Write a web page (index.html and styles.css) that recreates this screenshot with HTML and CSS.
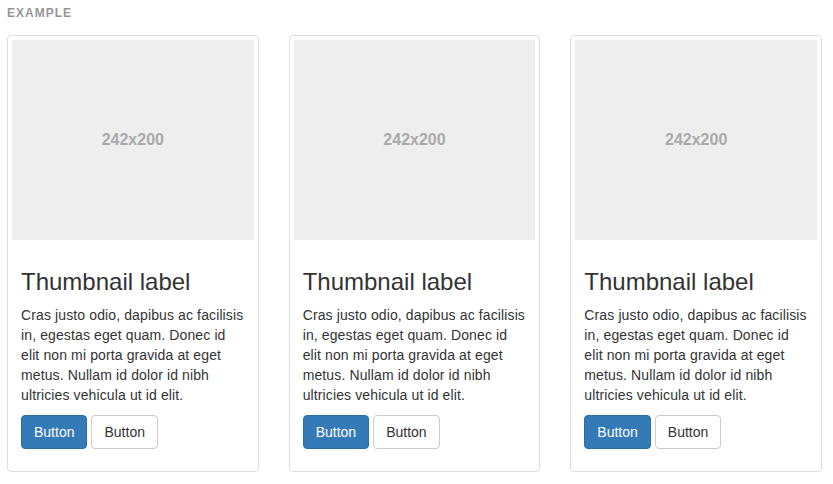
FILE: index.html
```html
<!DOCTYPE html>
<html lang="en">
<head>
    <meta charset="UTF-8">
    <meta name="viewport" content="width=device-width, initial-scale=1.0">
    <title>Thumbnails</title>
    <link rel="stylesheet" href="styles.css">
</head>
<body>
    <div class="example">
        <div class="example-label">Example</div>
        <div class="row">
            <div class="thumbnail">
                <div class="holder">242x200</div>
                <div class="caption">
                    <h3>Thumbnail label</h3>
                    <p>Cras justo odio, dapibus ac facilisis in, egestas eget quam. Donec id elit non mi porta gravida at eget metus. Nullam id dolor id nibh ultricies vehicula ut id elit.</p>
                    <div class="btns">
                        <a href="#" class="btn btn-primary">Button</a>
                        <a href="#" class="btn btn-default">Button</a>
                    </div>
                </div>
            </div>
            <div class="thumbnail">
                <div class="holder">242x200</div>
                <div class="caption">
                    <h3>Thumbnail label</h3>
                    <p>Cras justo odio, dapibus ac facilisis in, egestas eget quam. Donec id elit non mi porta gravida at eget metus. Nullam id dolor id nibh ultricies vehicula ut id elit.</p>
                    <div class="btns">
                        <a href="#" class="btn btn-primary">Button</a>
                        <a href="#" class="btn btn-default">Button</a>
                    </div>
                </div>
            </div>
            <div class="thumbnail">
                <div class="holder">242x200</div>
                <div class="caption">
                    <h3>Thumbnail label</h3>
                    <p>Cras justo odio, dapibus ac facilisis in, egestas eget quam. Donec id elit non mi porta gravida at eget metus. Nullam id dolor id nibh ultricies vehicula ut id elit.</p>
                    <div class="btns">
                        <a href="#" class="btn btn-primary">Button</a>
                        <a href="#" class="btn btn-default">Button</a>
                    </div>
                </div>
            </div>
        </div>
    </div>
</body>
</html>
```
FILE: styles.css
```css
*{
    margin: 0;
    padding: 0;
    box-sizing: border-box;
}
body{
    font-family: "Liberation Sans", Arial, sans-serif;
    font-size: 14px;
    line-height: 20px;
    color: #333;
    background-color: #fff;
}
.example{
    padding: 6px 11px 0 7px;
}
.example-label{
    font-size: 12px;
    line-height: 14px;
    font-weight: bold;
    color: #959595;
    text-transform: uppercase;
    letter-spacing: 1px;
    margin-bottom: 15px;
}
.row{
    display: grid;
    grid-template-columns: repeat(3, 1fr);
    column-gap: 30px;
}
.thumbnail{
    padding: 4px;
    border: 1px solid #ddd;
    border-radius: 4px;
    background-color: #fff;
}
.holder{
    height: 200px;
    background-color: #eee;
    color: #aaa;
    font-size: 16px;
    font-weight: bold;
    display: flex;
    align-items: center;
    justify-content: center;
}
.caption{
    padding: 9px;
}
.caption h3{
    margin-top: 20px;
    margin-bottom: 10px;
    font-size: 24px;
    font-weight: 500;
    line-height: 1.1;
}
.caption p{
    margin-bottom: 10px;
    letter-spacing: 0.12px;
}
.btns{
    display: flex;
    gap: 4px;
    margin-bottom: 9px;
}
.btn{
    display: inline-block;
    padding: 6px 12px;
    font-size: 14px;
    line-height: 20px;
    border: 1px solid transparent;
    border-radius: 4px;
    text-decoration: none;
}
.btn-primary{
    background-color: #337ab7;
    border-color: #2e6da4;
    color: #fff;
}
.btn-default{
    background-color: #fff;
    border-color: #ccc;
    color: #333;
}
```
